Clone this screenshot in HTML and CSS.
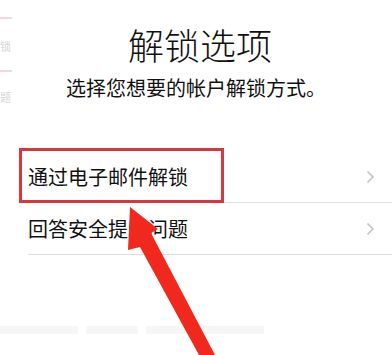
FILE: index.html
```html
<!DOCTYPE html>
<html lang="zh-CN">
<head>
  <meta charset="UTF-8">
  <meta name="viewport" content="width=device-width, initial-scale=1.0">
  <title>解锁选项</title>
  <link rel="stylesheet" href="styles.css">
</head>
<body>
  <div class="screen">
    <div class="ghost">
      <span class="ghost-line line-a"></span>
      <span class="ghost-char char-a">锁</span>
      <span class="ghost-line line-b"></span>
      <span class="ghost-char char-b">题</span>
      <div class="ghost-bars">
        <span class="ghost-bar bar-a"></span>
        <span class="ghost-bar bar-b"></span>
        <span class="ghost-bar bar-c"></span>
      </div>
    </div>

    <header class="header">
      <h1 class="title">解锁选项</h1>
      <p class="subtitle">选择您想要的帐户解锁方式。</p>
    </header>

    <ul class="options">
      <li class="option">
        <span class="label">通过电子邮件解锁</span>
        <svg class="chevron" width="9" height="14" viewBox="0 0 9 14"><polyline points="1.5,1.5 7,7 1.5,12.5" /></svg>
      </li>
      <li class="option">
        <span class="label">回答安全提示问题</span>
        <svg class="chevron" width="9" height="14" viewBox="0 0 9 14"><polyline points="1.5,1.5 7,7 1.5,12.5" /></svg>
      </li>
    </ul>

    <!-- annotation overlay -->
    <div class="highlight"></div>
    <svg class="arrow" width="392" height="355" viewBox="0 0 392 355">
      <polygon points="130,207 158,229 151,233 215,355 199,355 140,247 128,250" />
    </svg>
  </div>
</body>
</html>
```

FILE: styles.css
```css
body {
  margin: 0;
  background: #fff;
  font-family: "Noto Sans CJK SC", "Noto Sans", sans-serif;
  color: #111;
}
.screen {
  position: relative;
  width: 392px;
  height: 355px;
  overflow: hidden;
}
.header {
  padding-top: 24px;
  text-align: center;
}
.title {
  margin: 0 0 0 8px;
  font-size: 36px;
  line-height: 40px;
  font-weight: 300;
}
.subtitle {
  margin: 12px 0 0;
  font-size: 20px;
  line-height: 24px;
  font-weight: 400;
}
.options {
  list-style: none;
  margin: 51px 0 0 28px;
  padding: 0;
}
.option {
  display: flex;
  align-items: center;
  justify-content: space-between;
  height: 51px;
  padding-right: 17px;
  border-bottom: 1px solid #dedede;
}
.label {
  font-size: 20px;
  line-height: 24px;
}
.chevron {
  fill: none;
  stroke: #c2c2c2;
  stroke-width: 1.6;
}
.highlight {
  position: absolute;
  left: 19px;
  top: 148px;
  width: 199px;
  height: 49px;
  border: 3px solid #d8383c;
}
.arrow {
  position: absolute;
  left: 0;
  top: 0;
  fill: #f0281e;
}
.ghost {
  position: absolute;
  left: 0;
  top: 0;
  width: 40px;
  height: 355px;
}
.ghost-line {
  position: absolute;
  left: 0;
  width: 12px;
  height: 2px;
  background: #f6d6da;
}
.line-a { top: 17px; }
.line-b { top: 70px; }
.ghost-char {
  position: absolute;
  left: 0;
  font-size: 11px;
  line-height: 14px;
  color: #d4d4d4;
}
.char-a { top: 39px; }
.char-b { top: 90px; }
.ghost-bars {
  position: absolute;
  left: 0;
  top: 326px;
  display: flex;
  gap: 8px;
}
.ghost-bar {
  height: 8px;
  background: #f6f6f6;
}
.bar-a { width: 78px; }
.bar-b { width: 52px; }
.bar-c { width: 118px; }
```
